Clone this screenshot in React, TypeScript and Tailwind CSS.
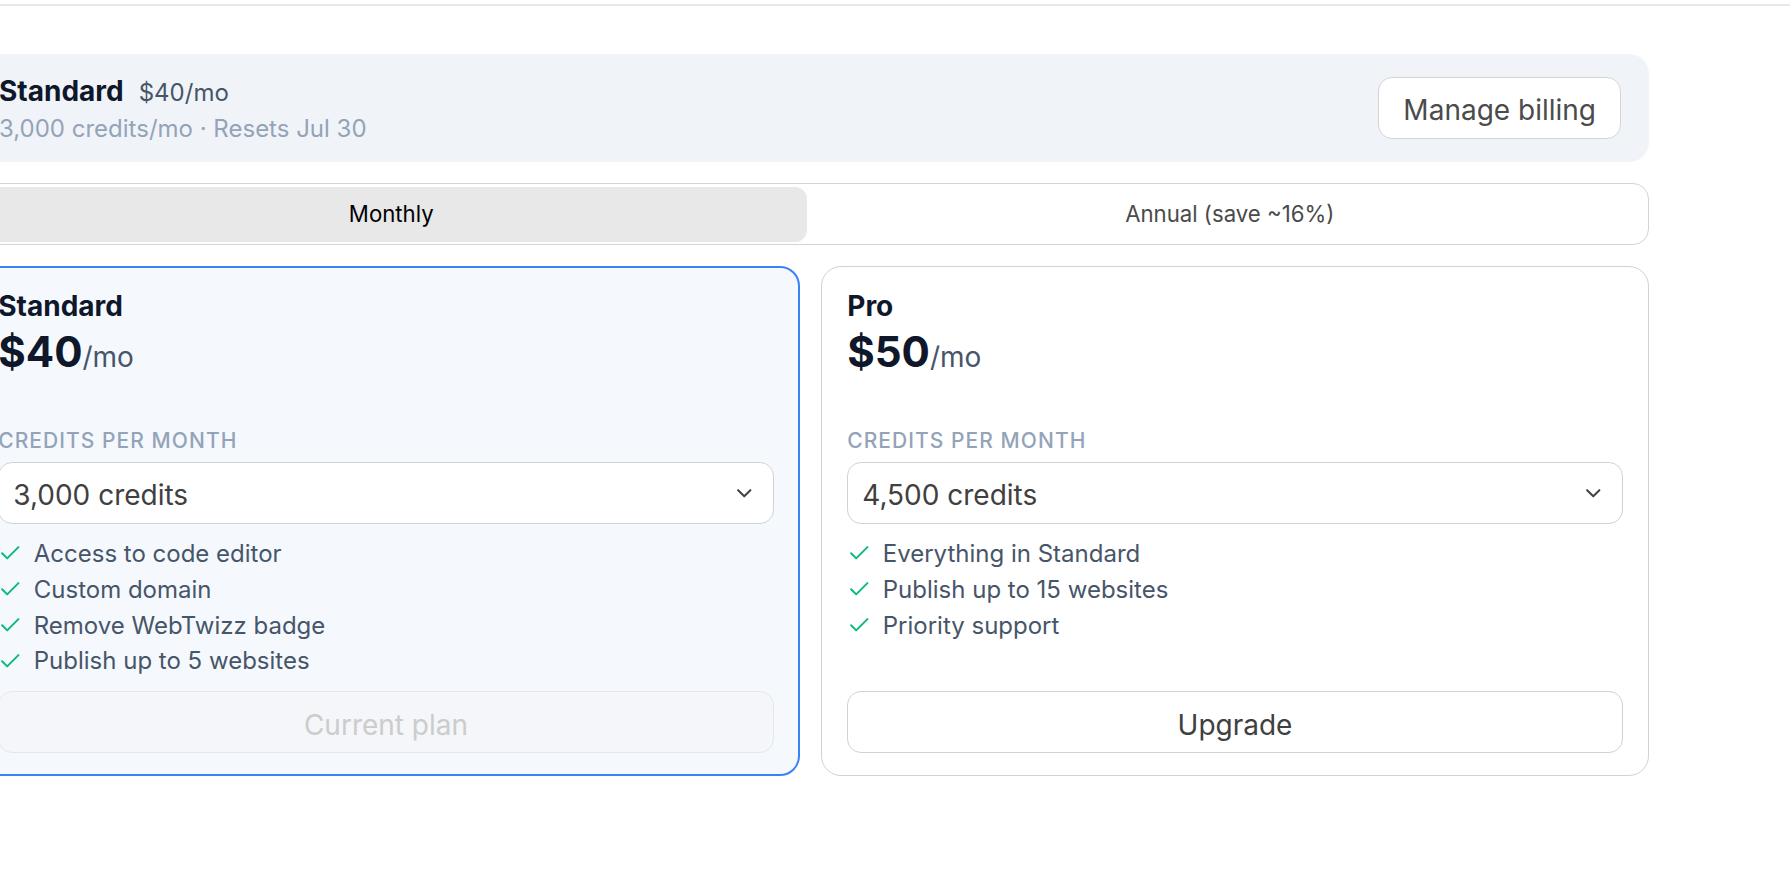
import React from 'react';
import { Check, ChevronDown } from 'lucide-react';

interface Plan {
  name: string;
  price: string;
  credits: string;
  features: string[];
  current: boolean;
}

const plans: Plan[] = [
  {
    name: 'Standard',
    price: '$40',
    credits: '3,000 credits',
    features: ['Access to code editor', 'Custom domain', 'Remove WebTwizz badge', 'Publish up to 5 websites'],
    current: true,
  },
  {
    name: 'Pro',
    price: '$50',
    credits: '4,500 credits',
    features: ['Everything in Standard', 'Publish up to 15 websites', 'Priority support'],
    current: false,
  },
];

const PlanCard: React.FC<{ plan: Plan }> = ({ plan }) => (
  <div
    className={
      plan.current
        ? 'flex flex-col rounded-[20px] border-2 border-[#3b82f6] bg-[#f5f9fe] px-[24.25px] py-[20.75px]'
        : 'flex flex-col rounded-[20px] border-[1.5px] border-[#d2d2d2] bg-white px-[25.25px] py-[21.75px]'
    }
  >
    <div className="text-[28px] font-bold leading-[35px] text-[#0f172a]">{plan.name}</div>
    <div className="flex items-baseline">
      <span className="text-[42px] font-bold leading-[56px] text-[#0f172a]">{plan.price}</span>
      <span className="text-[28px] text-[#475569]">/mo</span>
    </div>

    <div className="mt-[47px] text-[21px] font-medium uppercase leading-[28px] tracking-wider text-[#94a3b8]">
      Credits per month
    </div>
    <div className="mt-[7px] flex h-[62px] items-center justify-between rounded-[14px] border-[1.5px] border-[#d2d2d2] bg-white px-[14px] text-[28px] text-[#404040]">
      <span className="pt-[4px]">{plan.credits}</span>
      <ChevronDown size={24.5} strokeWidth={2} className="mr-[2px] text-[#444444]" />
    </div>

    <ul className="mt-[12px] flex flex-col">
      {plan.features.map((f) => (
        <li key={f} className="flex h-[35.75px] items-center gap-[11px] text-[24px] text-[#475569]">
          <Check size={24.5} strokeWidth={2} className="shrink-0 text-[#10b981]" />
          <span className="pt-[1px]">{f}</span>
        </li>
      ))}
    </ul>

    <div className="mt-auto pt-[12.5px]">
      {plan.current ? (
        <button className="h-[62px] w-full rounded-[14px] border-[1.5px] border-[#e6e6e6] bg-[#f4f6f9] pt-[5px] text-[28px] text-[#cccccc]">
          Current plan
        </button>
      ) : (
        <button className="h-[62px] w-full rounded-[14px] border-[1.5px] border-[#d2d2d2] bg-white pt-[5px] text-[28px] text-[#404040]">
          Upgrade
        </button>
      )}
    </div>
  </div>
);

export default function App() {
  return (
    <div className="h-[880px] w-full overflow-hidden bg-white font-[family-name:Inter,sans-serif]">
      {/* header divider */}
      <div className="h-[6px] border-b-2 border-[#e4e9f0]" />

      <div className="ml-[-28px] mt-[48px] flex w-[1677px] flex-col gap-[21px]">
        {/* current subscription */}
        <div className="flex h-[108px] items-center justify-between rounded-[20px] bg-[#f0f4f8] pl-[27px] pr-[28px]">
          <div className="flex flex-col pt-[3px]">
            <div className="flex items-baseline gap-[15px]">
              <span className="text-[28px] font-bold leading-[36px] text-[#0f172a]">Standard</span>
              <span className="text-[24px] text-[#475569]">$40/mo</span>
            </div>
            <div className="text-[24px] leading-[35px] text-[#94a3b8]">3,000 credits/mo · Resets Jul 30</div>
          </div>
          <button className="h-[62px] rounded-[14px] border-[1.5px] border-[#d4d4d4] bg-white px-[24px] pt-[3px] text-[28px] text-[#4b4b4b]">
            Manage billing
          </button>
        </div>

        {/* billing period toggle */}
        <div className="flex h-[62px] gap-[7px] rounded-[16px] border-[1.5px] border-[#d4d4d4] bg-white p-[2.5px]">
          <button className="flex-1 rounded-[12px] bg-[#e8e8e8] text-[22.2px] text-black">Monthly</button>
          <button className="flex-1 rounded-[12px] text-[22.2px] text-[#4a4a4a]">Annual (save ~16%)</button>
        </div>

        <div className="grid grid-cols-2 gap-[21px]">
          {plans.map((p) => (
            <PlanCard key={p.name} plan={p} />
          ))}
        </div>
      </div>
    </div>
  );
}
